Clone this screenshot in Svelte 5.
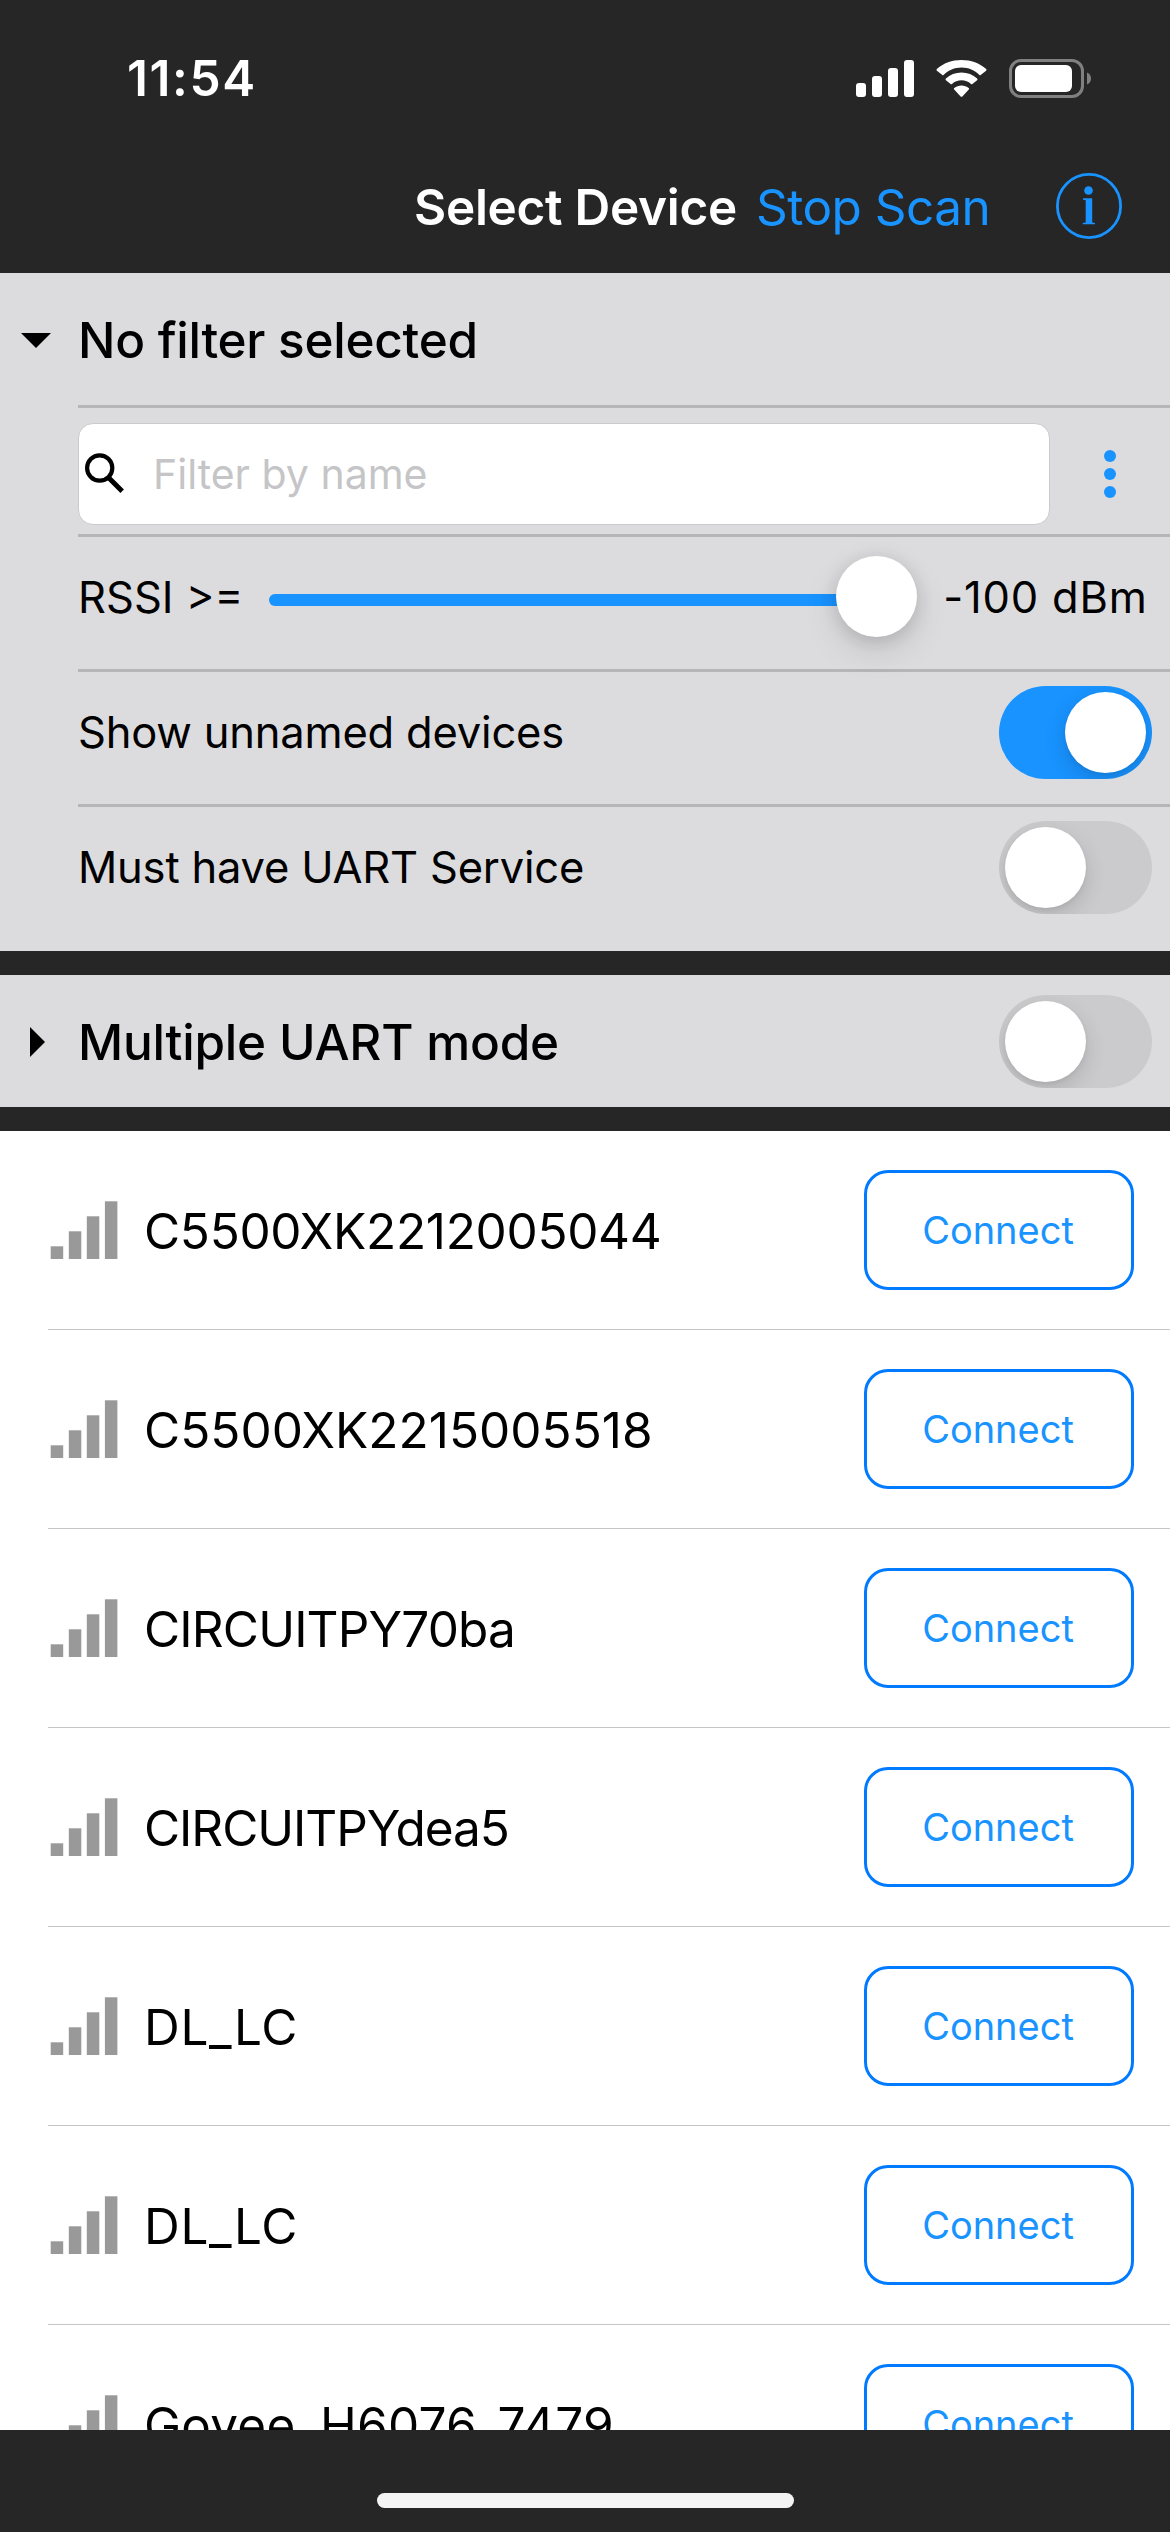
<script>
  const devices = [
    { name: 'C5500XK2212005044', tracking: -0.3 },
    { name: 'C5500XK2215005518', tracking: 0.03 },
    { name: 'CIRCUITPY70ba', tracking: -0.83 },
    { name: 'CIRCUITPYdea5', tracking: -1.05 },
    { name: 'DL_LC', tracking: 0.7 },
    { name: 'DL_LC', tracking: 0.7 },
    { name: 'Govee_H6076_7479', tracking: 0.26 }
  ];
  let showUnnamed = $state(true);
  let needUart = $state(false);
  let multiUart = $state(false);
</script>

{#snippet toggle(on, label, flip)}
  <button class="toggle" class:on role="switch" aria-checked={on} aria-label={label} onclick={flip}>
    <span class="knob"></span>
  </button>
{/snippet}

<div class="screen">
  <header>
    <div class="status">
      <span class="time">11:54</span>
      <svg class="cell" width="58" height="37" viewBox="0 0 58 37" fill="#fff">
        <rect x="0" y="23" width="10" height="14" rx="3" />
        <rect x="16" y="16" width="10" height="21" rx="3" />
        <rect x="32" y="8" width="10" height="29" rx="3" />
        <rect x="48" y="0" width="10" height="37" rx="3" />
      </svg>
      <svg class="wifi" width="51" height="37" viewBox="0 0 51 37" fill="#fff">
        <path d="M25.5 7.4c6.900 0 13.200 2.700 17.900 7.500.4.400.9.400 1.300 0l5.400-4.100c.5-.5.5-1.200.1-1.700C43.700 3.100 34.900 0 25.500 0S7.300 3.100.8 9.100c-.4.500-.4 1.200.1 1.700l5.400 4.100c.4.400.9.400 1.300 0 4.700-4.800 11-7.500 17.900-7.500z" />
        <path d="M25.500 20.300c3.600 0 6.900 1.300 9.500 3.700.4.400 1 .4 1.400 0l4.700-3.700c.5-.5.5-1.200 0-1.700-4.100-3.900-9.600-6-15.600-6s-11.500 2.100-15.600 6c-.5.500-.5 1.200 0 1.700l4.700 3.700c.4.400 1 .4 1.400 0 2.600-2.400 5.900-3.700 9.500-3.700z" />
        <path d="M32.800 29.500c.4-.5.400-1.200-.1-1.600-1.900-1.600-4.500-2.500-7.200-2.500s-5.300.9-7.200 2.500c-.5.400-.5 1.100-.1 1.600l6.400 6.900c.5.500 1.300.5 1.800 0z" />
      </svg>
      <svg class="battery" width="83" height="39" viewBox="0 0 83 39">
        <rect x="1.500" y="1.500" width="72" height="36" rx="10.500" fill="none" stroke="#808080" stroke-width="3" />
        <rect x="6" y="6" width="57" height="27" rx="6" fill="#fff" />
        <path d="M78 13.500c2.500 1 4 3.300 4 6s-1.500 5-4 6z" fill="#808080" />
      </svg>
    </div>
    <div class="nav">
      <h1>Select Device</h1>
      <span class="stop">Stop Scan</span>
      <svg class="info" width="66" height="66" viewBox="0 0 66 66">
        <circle cx="33" cy="33" r="31.600" fill="none" stroke="#1893ff" stroke-width="2.800" />
        <circle cx="32.500" cy="17.500" r="4.300" fill="#1893ff" />
        <path d="M27 25.300h9.200v24.200l2.800.4v1.400H26.700v-1.400l3-.4V27.200l-2.700-.5z" fill="#1893ff" />
      </svg>
    </div>
  </header>

  <section class="panel filters">
    <div class="head">
      <svg class="arrow" width="30" height="15" viewBox="0 0 30 15"><path d="M0 0h30L15 15z" /></svg>
      <h2 class="nofilter">No filter selected</h2>
    </div>
    <div class="row search">
      <div class="field">
        <svg width="40" height="40" viewBox="0 0 40 40" fill="none" stroke="#000">
          <circle cx="14.700" cy="15" r="12.600" stroke-width="4.200" />
          <path d="M23.200 24.200L37.200 38.200" stroke-width="5" />
        </svg>
        <span>Filter by name</span>
      </div>
      <svg class="dots" width="12" height="48" viewBox="0 0 12 48" fill="#1893ff">
        <circle cx="6" cy="6" r="6" /><circle cx="6" cy="24" r="6" /><circle cx="6" cy="42" r="6" />
      </svg>
    </div>
    <div class="row rssi">
      <span class="label">RSSI &gt;=</span>
      <div class="slider"><div class="track"></div><div class="thumb"></div></div>
      <span class="label value">-100 dBm</span>
    </div>
    <div class="row option">
      <span class="caption">Show unnamed devices</span>
      {@render toggle(showUnnamed, 'Show unnamed devices', () => (showUnnamed = !showUnnamed))}
    </div>
    <div class="row option last">
      <span class="caption">Must have UART Service</span>
      {@render toggle(needUart, 'Must have UART Service', () => (needUart = !needUart))}
    </div>
  </section>

  <section class="panel multi">
    <svg class="arrow" width="15" height="30" viewBox="0 0 15 30"><path d="M0 0v30L15 15z" /></svg>
    <h2>Multiple UART mode</h2>
    {@render toggle(multiUart, 'Multiple UART mode', () => (multiUart = !multiUart))}
  </section>

  <ul>
    {#each devices as device}
      <li>
        <svg class="bars" width="68" height="59" viewBox="0 0 68 59" fill="#999">
          <rect x="0.700" y="45.300" width="12.500" height="12.700" />
          <rect x="18.800" y="30.300" width="12.500" height="27.700" />
          <rect x="36.800" y="15.300" width="12.500" height="42.700" />
          <rect x="54.900" y="0.300" width="12.500" height="57.700" />
        </svg>
        <span class="name" style:letter-spacing="{device.tracking}px">{device.name}</span>
        <button class="connect">Connect</button>
      </li>
    {/each}
  </ul>

  <footer><div class="home"></div></footer>
</div>

<style>
  :global(body) { background: #262626; }
  .screen {
    width: 1170px;
    height: 2532px;
    display: flex;
    flex-direction: column;
    overflow: hidden;
    background: #262626;
    color: #000;
    font-family: Inter, 'Liberation Sans', sans-serif;
    font-size: 43.5px;
    line-height: 60px;
    white-space: nowrap;
  }
  svg { display: block; flex: none; }
  h1, h2, ul { margin: 0; padding: 0; }
  button { font-family: inherit; padding: 0; }

  header { height: 273px; flex: none; color: #fff; }
  .status {
    height: 156px;
    box-sizing: border-box;
    padding-left: 127px;
    display: flex;
    align-items: center;
  }
  .time { width: 729px; font-size: 49.5px; font-weight: 600; letter-spacing: 1.6px; }
  .wifi { margin-left: 22px; }
  .battery { margin-left: 22px; }
  .nav { height: 102px; display: flex; align-items: center; padding-left: 414px; }
  h1 { width: 342px; font-size: 49.5px; font-weight: 600; letter-spacing: -0.28px; }
  .stop { width: 300px; font-size: 49.5px; letter-spacing: -0.52px; color: #1893ff; }
  .info { margin-top: -2px; }

  .panel { background: #dcdcde; flex: none; }
  .filters { height: 678px; margin-bottom: 24px; }
  .head { height: 132px; box-sizing: border-box; padding: 2px 0 0 21px; display: flex; align-items: center; }
  h2 { font-size: 49.5px; font-weight: 500; letter-spacing: -0.21px; }
  .nofilter { margin-left: 27px; letter-spacing: -0.28px; }

  .row {
    height: 135px;
    box-sizing: border-box;
    margin-left: 78px;
    border-top: 3px solid #b6b6b8;
    display: flex;
    align-items: center;
  }
  .search { height: 129px; padding-top: 6px; }
  .field {
    width: 972px;
    height: 102px;
    box-sizing: border-box;
    border: 1px solid #cacacc;
    border-radius: 15px;
    background: #fff;
    padding-left: 6px;
    display: flex;
    align-items: center;
    font-size: 41px;
    color: #c5c5c7;
  }
  .field svg { margin-top: -2px; }
  .field span { margin-left: 28px; }
  .dots { margin-left: 54px; }

  .rssi { padding-bottom: 14px; }
  .label { padding-top: 2px; }
  .slider { width: 650px; height: 81px; margin-left: 26px; display: flex; align-items: center; }
  .track { width: 600px; height: 12px; margin: 7px -33px 0 0; flex: none; border-radius: 6px; background: #1893ff; }
  .thumb {
    width: 81px;
    height: 81px;
    flex: none;
    border-radius: 50%;
    background: #fff;
    box-shadow: 0 14px 36px rgba(0, 0, 0, 0.1), 0 4px 18px rgba(0, 0, 0, 0.14);
  }
  .value { margin-left: 24px; letter-spacing: 0.8px; }

  .option { justify-content: space-between; padding: 0 18px 11px 0; }
  .last { height: 136px; padding-bottom: 12px; }
  .caption { padding-bottom: 2px; letter-spacing: -0.2px; }
  .toggle {
    width: 153px;
    height: 93px;
    flex: none;
    display: flex;
    padding: 6px;
    border: 0;
    border-radius: 46.5px;
    background: #cbcbcd;
    overflow: hidden;
  }
  .toggle.on { justify-content: flex-end; background: #1893ff; }
  .knob {
    width: 81px;
    height: 81px;
    border-radius: 50%;
    background: #fff;
    box-shadow: 0 8px 22px rgba(0, 0, 0, 0.14), 0 2px 4px rgba(0, 0, 0, 0.06);
  }

  .multi {
    height: 132px;
    box-sizing: border-box;
    margin-bottom: 24px;
    padding: 1px 18px 0 30px;
    display: flex;
    align-items: center;
  }
  .multi h2 { flex: 1; margin-left: 33px; }

  ul { height: 1299px; flex: none; overflow: hidden; background: #fff; list-style: none; }
  li {
    height: 199px;
    box-sizing: border-box;
    margin-left: 48px;
    border-bottom: 1px solid #c6c6c8;
    padding: 0 36px 0 2px;
    display: flex;
    align-items: center;
  }
  .name { flex: 1; margin: 1px 0 0 26px; font-size: 49.5px; }
  .connect {
    width: 270px;
    height: 120px;
    padding-right: 2px;
    border: 3px solid #007aff;
    border-radius: 24px;
    background: none;
    color: #1893ff;
    font-size: 38px;
  }

  footer { flex: 1; display: flex; justify-content: center; padding-top: 63px; }
  .home { width: 417px; height: 15px; border-radius: 8px; background: #f4f4f4; }
</style>
